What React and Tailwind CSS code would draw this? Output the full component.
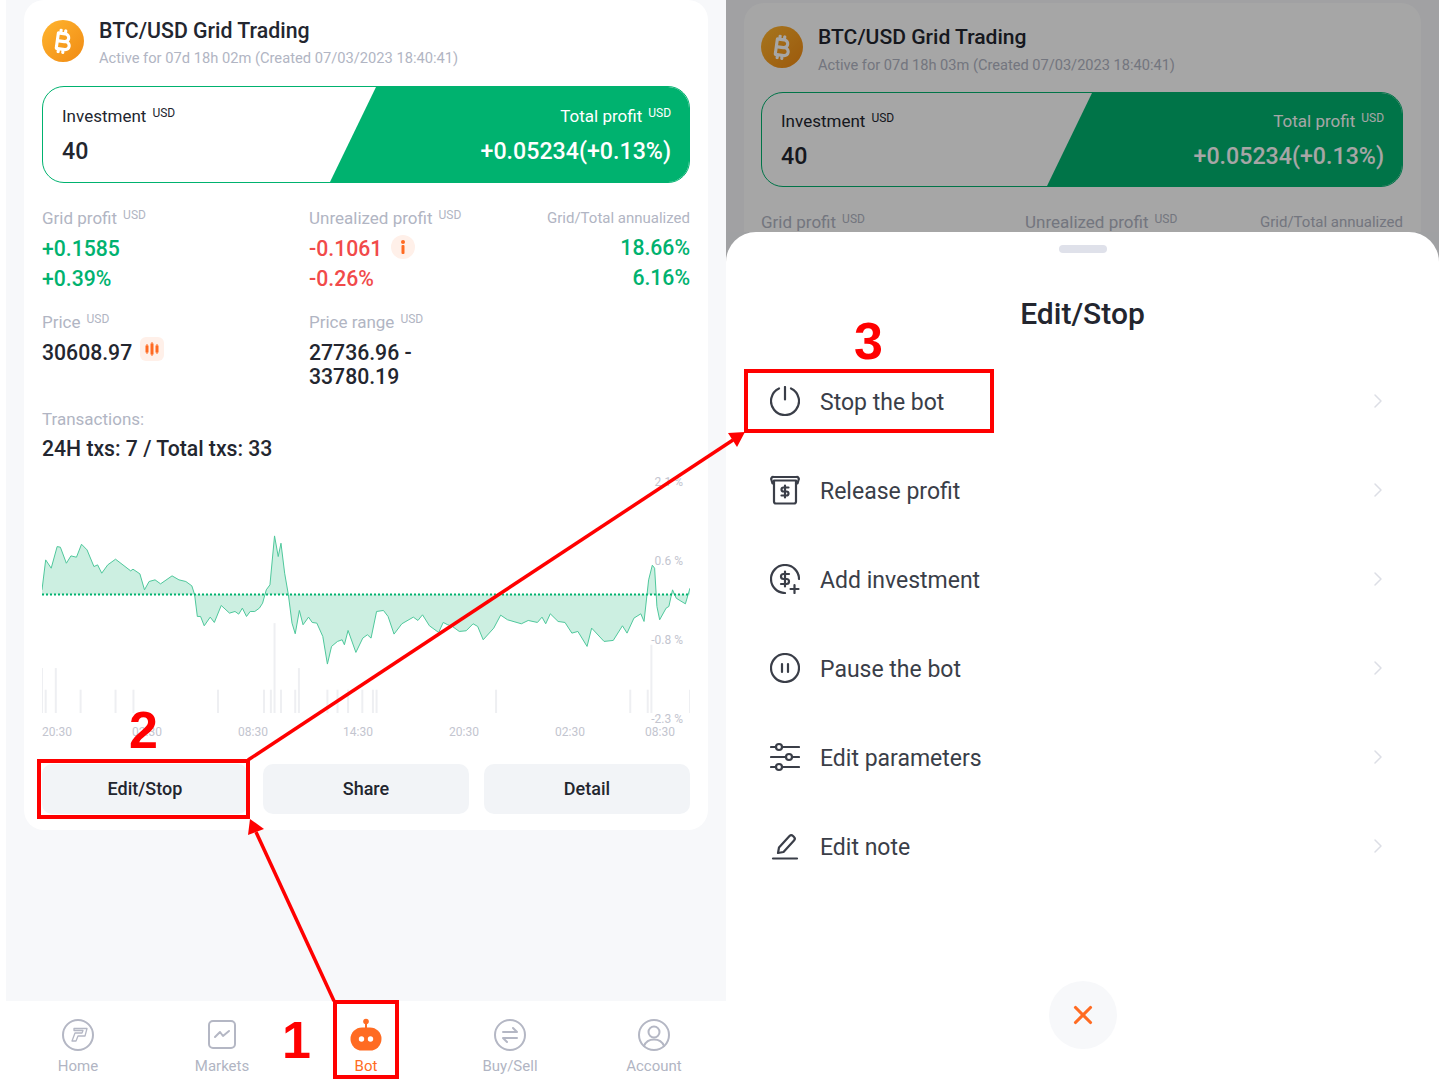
import React from 'react';
import { ChevronRight, X } from 'lucide-react';
import { FaBitcoinSign } from 'react-icons/fa6';

// traced from the reference, x is stretched 2.178 and y 3 times
const CURVE = '92,360 100,270 112,295 125,230 132,232 145,280 155,258 167,262 178,223 190,240 205,290 213,285 222,310 235,285 252,268 285,303 290,298 305,312 315,360 325,335 338,330 350,342 375,318 390,330 405,335 418,348 424,374 430,440 437,440 445,468 458,442 467,458 482,407 500,430 512,425 520,433 528,415 537,440 545,425 555,425 565,415 572,400 580,360 588,345 598,198 606,260 612,220 620,310 628,374 636,460 643,492 652,422 660,465 672,442 680,458 690,460 703,500 713,583 722,530 735,515 745,510 750,525 758,482 775,548 790,505 800,495 808,505 820,425 835,422 845,440 858,493 875,462 900,442 910,452 920,435 935,468 955,488 965,458 975,465 985,470 1000,485 1015,483 1030,462 1040,470 1052,510 1075,475 1090,436 1105,450 1135,462 1150,452 1170,458 1180,442 1188,462 1198,432 1215,455 1230,458 1245,490 1258,485 1278,530 1288,475 1315,515 1335,512 1355,468 1365,490 1380,445 1395,432 1402,455 1412,330 1420,286 1425,295 1430,410 1436,450 1450,415 1456,410 1464,360 1472,385 1480,392 1492,402 1502,355';

const BARS = [
  [92, 595], [100, 660], [122, 595], [176, 660], [252, 660], [291, 660], [475, 660], [575, 660],
  [590, 660], [598, 460], [612, 660], [643, 660], [651, 595], [713, 660], [735, 660], [758, 660],
  [789, 660], [812, 660], [820, 660], [1080, 660], [1372, 660], [1410, 660], [1418, 525], [1502, 660],
];

const Usd = () => <sup className="-top-[5px] ml-[6px] text-[12px] font-normal">USD</sup>;

const Coin = ({ size }) => (
  <div className={`flex shrink-0 items-center justify-center rounded-full bg-gradient-to-br from-[#ffb52e] to-[#f08a12] text-white ${size}`}>
    <FaBitcoinSign size={25} className="rotate-[8deg]" />
  </div>
);

const Summary = ({ elapsed, compact }) => (
  <>
    <div className="flex h-[48px] gap-[15px]">
      <Coin size="mt-[2px] h-[42px] w-[42px]" />
      <div>
        <div className={`font-medium leading-[26px] text-[#23262f] ${compact ? 'text-[21.1px]' : 'text-[21.3px]'}`}>BTC/USD Grid Trading</div>
        <div className={`leading-[20px] text-[#b1b5c3] ${compact ? 'mt-[5px] text-[14.6px]' : 'mt-[4px] text-[14.7px]'}`}>
          Active for {elapsed} (Created 07/03/2023 18:40:41)
        </div>
      </div>
    </div>
    <div className={`mt-[20px] flex justify-between overflow-hidden rounded-[22px] border-[1.5px] border-[#00b26f] bg-white ${compact ? 'h-[95px]' : 'h-[97px]'}`}>
      <div className={compact ? 'pl-[19px] pt-[16px]' : 'pl-[19px] pt-[17px]'}>
        <div className="text-[17px] leading-[24px] text-[#23262f]">Investment<Usd /></div>
        <div className="mt-[9px] text-[23.2px] font-medium leading-[28px] text-[#23262f]">40</div>
      </div>
      <div className={`flex flex-col items-end bg-[#00b26f] pr-[18px] text-white ${compact ? 'w-[355px] pt-[16px] [clip-path:polygon(45px_0,100%_0,100%_100%,0_100%)]' : 'w-[359px] pt-[17px] [clip-path:polygon(46px_0,100%_0,100%_100%,0_100%)]'}`}>
        <div className="text-[17px] leading-[24px]">Total profit<Usd /></div>
        <div className="mt-[9px] text-[23.2px] font-medium leading-[28px]">+0.05234(+0.13%)</div>
      </div>
    </div>
  </>
);

const Chart = () => (
  <div className="relative mt-[6px] h-[243px]">
    <svg viewBox="92 0 1410 730" preserveAspectRatio="none" className="h-[243px] w-[648px]">
      {BARS.map(([x, y]) => (
        <line key={x} x1={x} x2={x} y1={y} y2="730" stroke="#eeeff2" strokeWidth="2" vectorEffect="non-scaling-stroke" />
      ))}
      <polygon points={`92,374 ${CURVE} 1502,374`} fill="#ccefe1" />
      <polyline points={CURVE} fill="none" stroke="#4fc89c" strokeWidth="1" strokeLinejoin="round" vectorEffect="non-scaling-stroke" />
      <line x1="92" x2="1502" y1="374" y2="374" stroke="#00b26f" strokeWidth="2" strokeDasharray="2 2" vectorEffect="non-scaling-stroke" />
    </svg>
    <div className="absolute right-[7px] top-[4px] flex h-[253px] flex-col items-end justify-between text-[12px] leading-[16px] text-[#c3c5cf]">
      <span>2.1 %</span>
      <span>0.6 %</span>
      <span>-0.8 %</span>
      <span>-2.3 %</span>
    </div>
  </div>
);

const TabIcon = ({ children }) => (
  <svg width="34" height="34" viewBox="0 0 34 34" fill="none" stroke="#b4b7c4" strokeWidth="2" strokeLinecap="round" strokeLinejoin="round">
    {children}
  </svg>
);

const TABS = [
  {
    label: 'Home',
    icon: (
      <TabIcon>
        <circle cx="17" cy="17" r="15" />
        <path d="M13 10.500h13l-2 7.500h-7l-2 5h-4l3-8h7l1-2.500h-9z" strokeWidth="1.300" />
      </TabIcon>
    ),
  },
  {
    label: 'Markets',
    icon: (
      <TabIcon>
        <rect x="4" y="3" width="26" height="27" rx="4" />
        <path d="M10 19l5-5 3 4 6-5" />
      </TabIcon>
    ),
  },
  {
    label: 'Bot',
    active: true,
    icon: (
      <svg width="34" height="34" viewBox="0 0 34 34" fill="#ff6b22">
        <circle cx="17" cy="3.500" r="2.800" />
        <rect x="16" y="4" width="2" height="7" />
        <rect x="1.500" y="9.500" width="31" height="23" rx="11.500" />
        <circle cx="12.500" cy="21" r="2.700" fill="#fff" />
        <circle cx="21.500" cy="21" r="2.700" fill="#fff" />
      </svg>
    ),
  },
  {
    label: 'Buy/Sell',
    icon: (
      <TabIcon>
        <circle cx="17" cy="17" r="15" />
        <path d="M10 14h14l-4-4M24 20h-14l4 4" />
      </TabIcon>
    ),
  },
  {
    label: 'Account',
    icon: (
      <TabIcon>
        <circle cx="17" cy="17" r="15" />
        <circle cx="17" cy="14" r="5.500" />
        <path d="M7 28c2-5 6-6.500 10-6.500s8 1.500 10 6.500" />
      </TabIcon>
    ),
  },
];

const MenuIcon = ({ children }) => (
  <svg width="30" height="30" viewBox="0 0 30 30" fill="none" stroke="#3a3e48" strokeWidth="2.200" strokeLinecap="round" strokeLinejoin="round" className="shrink-0">
    {children}
  </svg>
);

const MENU = [
  {
    label: 'Stop the bot',
    icon: (
      <MenuIcon>
        <path d="M9 2.400a14 14 0 1 0 12 0" />
        <path d="M15 1v12.500" />
      </MenuIcon>
    ),
  },
  {
    label: 'Release profit',
    icon: (
      <MenuIcon>
        <path d="M4 8.500h-1.500l-1-3.500a2 2 0 0 1 2-3h23a2 2 0 0 1 2 3l-1 3.500h-1.500" />
        <path d="M4 5.500h22v21a2 2 0 0 1-2 2h-18a2 2 0 0 1-2-2z" />
        <path d="M18.500 12.500h-5a1.800 1.800 0 0 0 0 4h3a1.800 1.800 0 0 1 0 4h-5M15 10.500v12" />
      </MenuIcon>
    ),
  },
  {
    label: 'Add investment',
    icon: (
      <MenuIcon>
        <path d="M29 15a14 14 0 1 0-14 14" />
        <path d="M19 10h-5.500a2.500 2.500 0 0 0 0 5h3a2.500 2.500 0 0 1 0 5h-5.500M15 7.500v15" />
        <path d="M24.500 21v8M20.500 25h8" />
      </MenuIcon>
    ),
  },
  {
    label: 'Pause the bot',
    icon: (
      <MenuIcon>
        <circle cx="15" cy="15" r="14" />
        <path d="M12 11v8M18 11v8" />
      </MenuIcon>
    ),
  },
  {
    label: 'Edit parameters',
    icon: (
      <MenuIcon>
        <path d="M1 5h5M12 5h17M1 15h15M22 15h7M1 25h5M12 25h17" />
        <circle cx="9" cy="5" r="3" />
        <circle cx="19" cy="15" r="3" />
        <circle cx="9" cy="25" r="3" />
      </MenuIcon>
    ),
  },
  {
    label: 'Edit note',
    icon: (
      <MenuIcon>
        <path d="M3 27.500h24" />
        <path d="M8 22l1-5.500L19.500 5a2.500 2.500 0 0 1 3.500 0l1 1a2.500 2.500 0 0 1 0 3.500L13.500 21z" />
      </MenuIcon>
    ),
  },
];

const Annotations = () => (
  <>
    <div className="absolute left-[333px] top-[1000px] h-[79px] w-[66px] border-[4px] border-[#f00]" />
    <div className="absolute left-[37px] top-[759px] h-[60px] w-[213px] border-[4px] border-[#f00]" />
    <div className="absolute left-[744px] top-[369px] h-[64px] w-[250px] border-[4px] border-[#f00]" />
    <svg width="1439" height="1079" className="absolute left-0 top-0" fill="#f00" stroke="#f00">
      <line x1="334" y1="1001" x2="256" y2="832" strokeWidth="3.500" />
      <polygon points="250,819 264,829 248,835" strokeWidth="0" />
      <line x1="248" y1="760" x2="733" y2="440" strokeWidth="3.500" />
      <polygon points="745,432 737,447 728,433" strokeWidth="0" />
    </svg>
    <span className="absolute left-[282px] top-[1011px] font-['Liberation_Sans',sans-serif] text-[52px] font-bold leading-[58px] text-[#f00]">1</span>
    <span className="absolute left-[129px] top-[701px] font-['Liberation_Sans',sans-serif] text-[52px] font-bold leading-[58px] text-[#f00]">2</span>
    <span className="absolute left-[854px] top-[312px] font-['Liberation_Sans',sans-serif] text-[52px] font-bold leading-[58px] text-[#f00]">3</span>
  </>
);

export default function App() {
  return (
    <div className="relative flex h-[1079px] w-[1439px] overflow-hidden bg-white pl-[6px] font-['Roboto',sans-serif]">
      {/* left phone screen */}
      <div className="flex w-[720px] flex-col">
        <div className="h-[1001px] bg-[#f7f8fa] px-[18px]">
          <div className="h-[830px] rounded-[20px] bg-white px-[18px] pt-[18px]">
            <Summary elapsed="07d 18h 02m" />

            <div className="mt-[23px] grid grid-cols-[267px_1fr_auto] text-[17px] leading-[24px] text-[#b1b5c3]">
              <div>
                <div>Grid profit<Usd /></div>
                <div className="mt-[4px] text-[21.200px] font-medium leading-[30px] text-[#00b26f]">+0.1585<br />+0.39%</div>
              </div>
              <div>
                <div>Unrealized profit<Usd /></div>
                <div className="mt-[4px] text-[21.200px] font-medium leading-[30px] text-[#f14a4a]">
                  <div className="flex items-center gap-[9px]">
                    -0.1061
                    <span className="-mt-[4px] flex h-[24px] w-[24px] items-center justify-center rounded-full bg-[#fff0e9]">
                      <svg width="4" height="14" viewBox="0 0 4 14" fill="#ff6b22"><circle cx="2" cy="2" r="2" /><rect x="0.500" y="5" width="3" height="9" rx="1" /></svg>
                    </span>
                  </div>
                  -0.26%
                </div>
              </div>
              <div className="text-right">
                <div className="text-[15px]">Grid/Total annualized</div>
                <div className="mt-[3px] text-[21.200px] font-medium leading-[30px] text-[#00b26f]">18.66%<br />6.16%</div>
              </div>

              <div className="mt-[16px]">
                <div>Price<Usd /></div>
                <div className="mt-[7px] flex items-center gap-[8px] text-[21.200px] font-medium leading-[24px] text-[#23262f]">
                  30608.97
                  <span className="-mt-[8px] flex h-[24px] w-[24px] items-center justify-center rounded-[6px] bg-[#fff0e9]">
                    <svg width="14" height="14" viewBox="0 0 14 14" fill="#ff6b22" stroke="#ff6b22">
                      <rect x="1" y="4" width="2" height="6" />
                      <rect x="6" y="2" width="2" height="10" />
                      <rect x="11" y="4" width="2" height="6" />
                      <path d="M2 2v10M7 0v14M12 2v10" strokeWidth="1" />
                    </svg>
                  </span>
                </div>
              </div>
              <div className="col-span-2 mt-[16px]">
                <div>Price range<Usd /></div>
                <div className="mt-[7px] text-[21.200px] font-medium leading-[24px] text-[#23262f]">27736.96 -<br />33780.19</div>
              </div>
            </div>

            <div className="mt-[18px] text-[17px] leading-[24px] text-[#b1b5c3]">Transactions:</div>
            <div className="mt-[3px] text-[21.200px] font-medium leading-[30px] text-[#23262f]">24H txs: 7 / Total txs: 33</div>

            <Chart />

            <div className="mt-[9px] flex h-[20px] text-[12px] leading-[20px] text-[#c3c5cf]">
              <span className="w-[31px]">20:30</span>
              <span className="ml-[59px] w-[31px]">02:30</span>
              <span className="ml-[75px] w-[31px]">08:30</span>
              <span className="ml-[74px] w-[31px]">14:30</span>
              <span className="ml-[75px] w-[31px]">20:30</span>
              <span className="ml-[75px] w-[31px]">02:30</span>
              <span className="ml-[59px] w-[31px]">08:30</span>
            </div>

            <div className="mt-[22px] grid grid-cols-3 gap-[15px]">
              {['Edit/Stop', 'Share', 'Detail'].map((label) => (
                <button key={label} className="h-[50px] rounded-[10px] bg-[#f2f4f7] pb-[2px] text-[18px] font-medium text-[#23262f]">{label}</button>
              ))}
            </div>
          </div>
        </div>

        <div className="grid flex-1 grid-cols-5 pt-[17px]">
          {TABS.map((tab) => (
            <div key={tab.label} className="flex flex-col items-center">
              {tab.icon}
              <span className={`mt-[4px] text-[15px] leading-[20px] ${tab.active ? 'text-[#ff6b22]' : 'text-[#b1b5c3]'}`}>{tab.label}</span>
            </div>
          ))}
        </div>
      </div>

      {/* right phone screen, sheet opened over the dimmed card */}
      <div className="flex w-[713px] flex-col bg-[#a0a1a3]">
        <div className="relative h-[232px] shrink-0 overflow-hidden bg-[#f7f8fa] px-[18px] pt-[3px]">
          <div className="h-[400px] rounded-[20px] bg-white pl-[17px] pr-[18px] pt-[21px]">
            <Summary elapsed="07d 18h 03m" compact />
            <div className="mt-[23px] grid grid-cols-[264px_1fr_auto] text-[17px] leading-[24px] text-[#b1b5c3]">
              <span>Grid profit<Usd /></span>
              <span>Unrealized profit<Usd /></span>
              <span className="text-[15px]">Grid/Total annualized</span>
            </div>
          </div>
          <div className="absolute inset-0 bg-black/35" />
        </div>
        <div className="flex-1 rounded-t-[30px] bg-white">
          <div className="mx-auto mt-[13px] h-[8px] w-[48px] rounded-full bg-[#dfe1ea]" />
          <div className="mt-[43px] text-center text-[30px] font-medium leading-[36px] text-[#23262f]">Edit/Stop</div>
          <div className="mt-[24px]">
            {MENU.map((item) => (
              <div key={item.label} className="flex h-[89px] items-center pl-[44px] pr-[49px]">
                {item.icon}
                <span className="ml-[20px] flex-1 pt-[4px] text-[23px] leading-[30px] text-[#3a3e48]">{item.label}</span>
                <ChevronRight size={24} strokeWidth={1.500} className="text-[#dcdee5]" />
              </div>
            ))}
          </div>
          <button className="mx-auto mt-[91px] flex h-[68px] w-[68px] items-center justify-center rounded-full bg-[#f7f8fa] text-[#ff6b22]">
            <X size={30} strokeWidth={2.500} />
          </button>
        </div>
      </div>

      <Annotations />
    </div>
  );
}
